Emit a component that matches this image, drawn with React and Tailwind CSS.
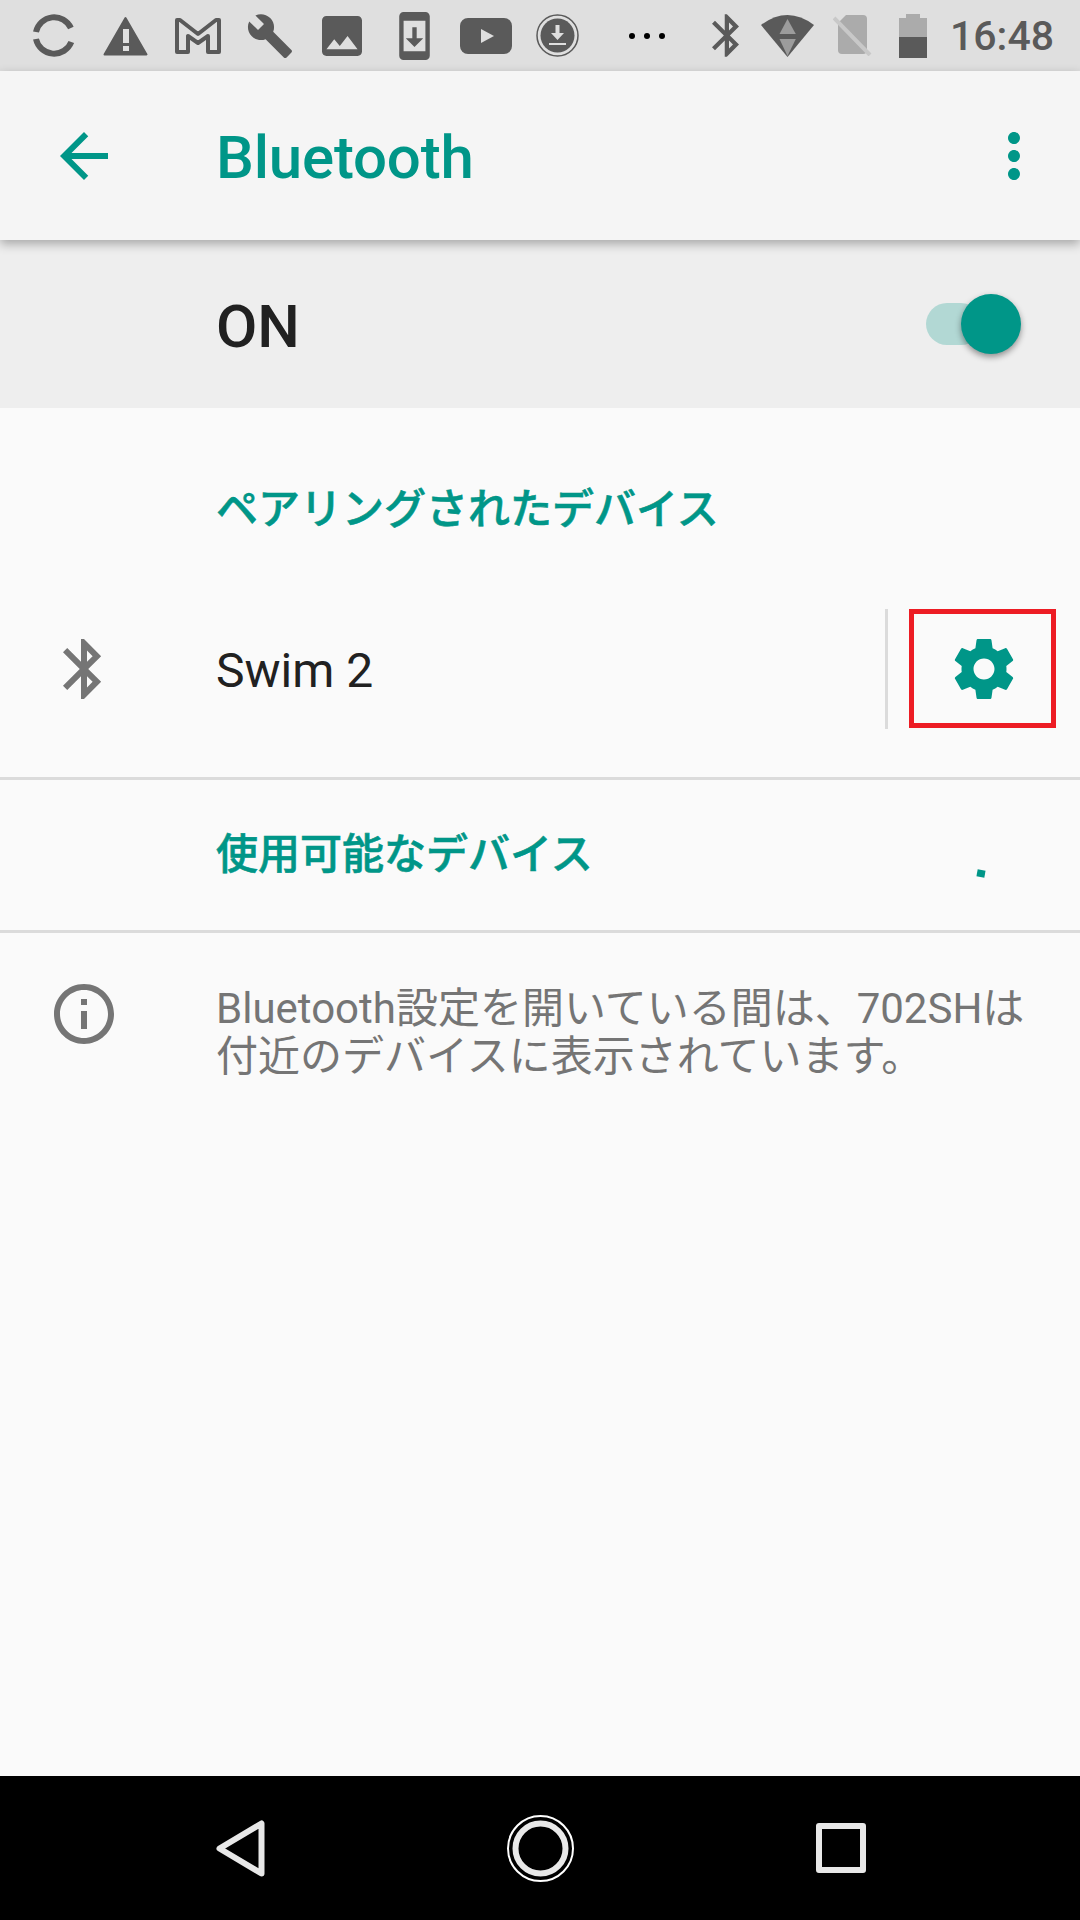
import React from 'react';

const FONT = "font-['Roboto','Noto_Sans_CJK_JP',sans-serif]";

const BLUETOOTH = 'M17.71 7.71L12 2h-1v7.59L6.41 5 5 6.41 10.59 12 5 17.59 6.41 19 11 14.41V22h1l5.71-5.71-4.3-4.29 4.3-4.29zM13 5.83l1.88 1.88L13 9.59V5.83zm1.88 10.46L13 18.17v-3.76l1.88 1.88z';

function StatusBar() {
  return (
    <div className="h-[71px] bg-[#dfdfdf] flex items-center pl-[33px] text-[#5a5a5a]">
      {/* sync */}
      <svg width="42" height="43" viewBox="0 0 42 43" fill="none" stroke="currentColor" strokeWidth="6">
        <path d="M3 18A18.5 18.5 0 0 1 37.9 14" />
        <path d="M3 25A18.5 18.5 0 0 0 38.3 28" />
      </svg>
      {/* warning */}
      <svg className="ml-[28px]" width="45" height="40" viewBox="0 0 45 40">
        <path d="M22.5 2L43.5 38.5H1.5Z" fill="currentColor" stroke="currentColor" strokeWidth="2" strokeLinejoin="round" />
        <path d="M20 13h6v14h-6zM20 30h6v5h-6z" fill="#dfdfdf" />
      </svg>
      {/* gmail */}
      <svg className="ml-[27px]" width="46" height="36" viewBox="0 0 46 36" fill="none" stroke="currentColor" strokeWidth="4" strokeLinejoin="round">
        <path d="M2 2H5L23 16 41 2H44V34H33V18L23 25 13 18V34H2Z" />
      </svg>
      {/* wrench */}
      <svg className="ml-[25px]" width="48" height="48" viewBox="0 0 24 24" fill="currentColor">
        <path d="M22.7 19l-9.1-9.1c.9-2.3.4-5-1.5-6.9-2-2-5-2.4-7.4-1.3L9 6 6 9 1.6 4.7C.4 7.1.9 10.1 2.9 12.1c1.9 1.9 4.6 2.4 6.9 1.5l9.1 9.1c.4.4 1 .4 1.4 0l2.3-2.3c.5-.4.5-1.1.1-1.4z" />
      </svg>
      {/* image */}
      <svg className="ml-[28px]" width="40" height="40" viewBox="3 3 18 18" fill="currentColor">
        <path d="M21 19V5c0-1.1-.9-2-2-2H5c-1.1 0-2 .9-2 2v14c0 1.1.9 2 2 2h14c1.1 0 2-.9 2-2zM8.5 13.5l2.5 3.01L14.5 12l4.5 6H5l3.5-4.5z" />
      </svg>
      {/* phone download */}
      <svg className="ml-[37px]" width="31" height="48" viewBox="5 1 14 22" fill="currentColor">
        <path d="M17 1.01L7 1c-1.1 0-2 .9-2 2v18c0 1.1.9 2 2 2h10c1.1 0 2-.9 2-2V3c0-1.1-.9-1.99-2-1.99zM17 19H7V5h10v14zm-1-6h-3V8h-2v5H8l4 4 4-4z" />
      </svg>
      {/* youtube */}
      <svg className="ml-[30px]" width="52" height="36" viewBox="0 0 52 36">
        <rect width="52" height="36" rx="8" fill="currentColor" />
        <path d="M21 11L34 18 21 25Z" fill="#dfdfdf" />
      </svg>
      {/* download circle */}
      <svg className="ml-[24px]" width="43" height="43" viewBox="0 0 43 43">
        <circle cx="21.5" cy="21.5" r="20.5" fill="none" stroke="currentColor" strokeWidth="1.5" />
        <circle cx="21.5" cy="21.5" r="17" fill="currentColor" />
        <path d="M19.5 11h4v8h4.5l-6.5 7-6.5-7h4.5z" fill="#dfdfdf" />
        <rect x="13" y="29" width="17" height="2" fill="#dfdfdf" />
      </svg>
      {/* overflow dots */}
      <div className="ml-[50px] flex gap-[9px]">
        <div className="w-[6px] h-[6px] rounded-full bg-black" />
        <div className="w-[6px] h-[6px] rounded-full bg-black" />
        <div className="w-[6px] h-[6px] rounded-full bg-black" />
      </div>
      {/* bluetooth */}
      <svg className="ml-[47px]" width="27" height="43" viewBox="5 2 12.71 20" fill="currentColor">
        <path d={BLUETOOTH} />
      </svg>
      {/* signal */}
      <svg className="ml-[22px]" width="53" height="42" viewBox="0 0 53 42">
        <path d="M0 10Q26.5 -10 53 10L26.5 42Z" fill="currentColor" />
        <path d="M26.5 4L34.8 19H18.5Z" fill="#9c9c9c" />
        <path d="M18.5 24H34.8L26.5 41Z" fill="#9c9c9c" />
      </svg>
      {/* no sim */}
      <svg className="ml-[19px]" width="39" height="41" viewBox="0 0 39 41">
        <path d="M13 0H30a4 4 0 0 1 4 4V35a4 4 0 0 1-4 4H9a4 4 0 0 1-4-4V8Z" fill="#ababab" />
        <path d="M1 3L37 40" stroke="#c8c8c8" strokeWidth="4" />
      </svg>
      {/* battery */}
      <div className="ml-[27px] w-[28px] h-[44px] flex flex-col items-center">
        <div className="w-[14px] h-[4px] bg-[#ababab]" />
        <div className="w-[28px] h-[19px] bg-[#ababab]" />
        <div className="w-[28px] h-[21px] bg-[#5a5a5a]" />
      </div>
      <span className={`ml-[23px] pt-[2px] ${FONT} text-[41px] leading-none font-medium text-[#5a5a5a]`}>16:48</span>
    </div>
  );
}

function Toolbar() {
  return (
    <div className="relative z-10 h-[169px] bg-[#f5f5f5] flex items-center shadow-[0_4px_10px_rgba(0,0,0,0.3)] text-[#009688]">
      <div className="w-[216px] pl-[48px]">
        <svg width="72" height="72" viewBox="0 0 24 24" fill="currentColor">
          <path d="M20 11H7.83l5.59-5.59L12 4l-8 8 8 8 1.41-1.41L7.83 13H20v-2z" />
        </svg>
      </div>
      <h1 className={`${FONT} pt-[5px] text-[60px] leading-none font-medium tracking-[-0.2px]`}>Bluetooth</h1>
      <svg className="ml-auto mr-[30px]" width="72" height="72" viewBox="0 0 24 24" fill="currentColor">
        <path d="M12 8c1.1 0 2-.9 2-2s-.9-2-2-2-2 .9-2 2 .9 2 2 2zm0 2c-1.1 0-2 .9-2 2s.9 2 2 2 2-.9 2-2-.9-2-2-2zm0 6c-1.1 0-2 .9-2 2s.9 2 2 2 2-.9 2-2-.9-2-2-2z" />
      </svg>
    </div>
  );
}

function MainSwitch() {
  return (
    <div className="h-[168px] bg-[#eeeeee] flex items-center pl-[216px]">
      <span className={`${FONT} pt-[5px] text-[60px] leading-none font-medium text-[#212121]`}>ON</span>
      <div className="ml-auto mr-[59px] flex items-center">
        <div className="w-[56px] h-[42px] rounded-full bg-[#b2d8d4]" />
        <div className="relative -ml-[21px] w-[60px] h-[60px] rounded-full bg-[#009688] shadow-[0_3px_6px_rgba(0,0,0,0.4)]" />
      </div>
    </div>
  );
}

export default function App() {
  return (
    <div className={`w-[1080px] h-[1920px] flex flex-col bg-[#fafafa] overflow-hidden ${FONT}`}>
      <StatusBar />
      <Toolbar />
      <MainSwitch />

      {/* paired devices */}
      <div className="h-[201px] pl-[216px] pt-[81px] text-[42px] leading-[42px] font-medium [-webkit-text-stroke:0.6px_#009688] text-[#009688]">
        ペアリングされたデバイス
      </div>
      <div className="h-[171px] flex items-start border-b-[3px] border-[#dbdbdb]">
        <svg className="ml-[48px] mt-[24px]" width="72" height="72" viewBox="0 0 24 24" fill="#757575">
          <path d={BLUETOOTH} />
        </svg>
        <span className="ml-[96px] mt-[34px] text-[48px] leading-[56px] text-[#212121]">Swim 2</span>
        <div className="ml-auto w-[3px] h-[120px] bg-[#dbdbdb]" />
        <div className="ml-[21px] mr-[24px] pl-[3px] w-[147px] h-[119px] border-[5px] border-[#ed1c24] flex items-center justify-center">
          <svg width="72" height="72" viewBox="0 0 24 24" fill="#009688">
            <path d="M19.43 12.98c.04-.32.07-.64.07-.98s-.03-.66-.07-.98l2.11-1.65c.19-.15.24-.42.12-.64l-2-3.46c-.12-.22-.39-.3-.61-.22l-2.49 1c-.52-.4-1.08-.73-1.69-.98l-.38-2.65C14.46 2.18 14.25 2 14 2h-4c-.25 0-.46.18-.49.42l-.38 2.65c-.61.25-1.17.59-1.69.98l-2.49-1c-.23-.09-.49 0-.61.22l-2 3.46c-.13.22-.07.49.12.64l2.11 1.65c-.04.32-.07.65-.07.98s.03.66.07.98l-2.11 1.65c-.19.15-.24.42-.12.64l2 3.46c.12.22.39.3.61.22l2.49-1c.52.4 1.08.73 1.69.98l.38 2.65c.03.24.24.42.49.42h4c.25 0 .46-.18.49-.42l.38-2.65c.61-.25 1.17-.59 1.69-.98l2.49 1c.23.09.49 0 .61-.22l2-3.46c.12-.22.07-.49-.12-.64l-2.11-1.65zM12 15.5c-1.93 0-3.5-1.57-3.5-3.5s1.57-3.5 3.5-3.5 3.5 1.57 3.5 3.5-1.57 3.5-3.5 3.5z" />
          </svg>
        </div>
      </div>

      {/* available devices */}
      <div className="h-[153px] flex items-center pl-[216px] border-b-[3px] border-[#dbdbdb]">
        <span className="text-[42px] leading-[42px] font-medium [-webkit-text-stroke:0.6px_#009688] text-[#009688]">使用可能なデバイス</span>
        <div className="ml-auto mr-[95px] mt-[36px] w-[8px] h-[7px] bg-[#009688] rotate-[10deg]" />
      </div>

      {/* info */}
      <div className="flex-1 flex items-start">
        <svg className="ml-[48px] mt-[45px]" width="72" height="72" viewBox="0 0 24 24" fill="#757575">
          <path d="M11 17h2v-6h-2v6zm1-15C6.48 2 2 6.48 2 12s4.48 10 10 10 10-4.48 10-10S17.52 2 12 2zm0 18c-4.41 0-8-3.59-8-8s3.59-8 8-8 8 3.59 8 8-3.59 8-8 8zM11 9h2V7h-2v2z" />
        </svg>
        <p className="ml-[96px] mt-[52px] w-[830px] text-[42px] leading-[48px] text-[#757575]">
          Bluetooth設定を開いている間は、702SHは<br />付近のデバイスに表示されています。
        </p>
      </div>

      {/* nav bar */}
      <div className="h-[144px] bg-black flex items-center pl-[216px] gap-[242px] shrink-0">
        <svg width="49" height="57" viewBox="0 0 49 57" fill="none" stroke="#e8e8e8" strokeWidth="6" strokeLinejoin="round">
          <path d="M45.5 3.5V53.5L3.5 28.5Z" />
        </svg>
        <svg width="67" height="67" viewBox="0 0 67 67" fill="none">
          <circle cx="33.5" cy="33.5" r="32.5" stroke="#ffffff" strokeWidth="2" />
          <circle cx="33.5" cy="33.5" r="25" stroke="#e8e8e8" strokeWidth="6" />
        </svg>
        <div className="w-[50px] h-[50px] rounded-[3px] border-[6px] border-[#e8e8e8]" />
      </div>
    </div>
  );
}
